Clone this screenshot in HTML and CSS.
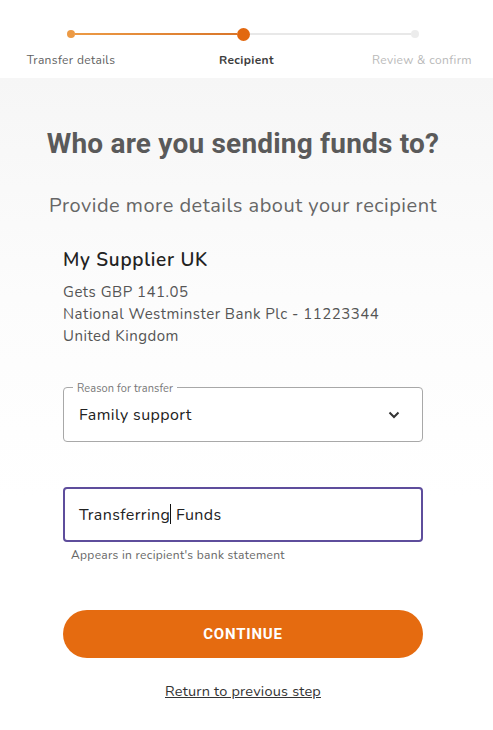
FILE: index.html
```html
<!DOCTYPE html>
<html lang="en">
<head>
<meta charset="utf-8">
<title>Recipient</title>
<link rel="stylesheet" href="styles.css">
</head>
<body>
<header class="stepper">
  <div class="track">
    <span class="dot dot-done"></span>
    <span class="line line-done"></span>
    <span class="dot dot-current"></span>
    <span class="line line-todo"></span>
    <span class="dot dot-todo"></span>
  </div>
  <div class="labels">
    <span class="label">Transfer details</span>
    <span class="label label-current">Recipient</span>
    <span class="label label-todo">Review &amp; confirm</span>
  </div>
</header>
<main class="content">
  <h1 class="title">Who are you sending funds to?</h1>
  <p class="subtitle">Provide more details about your recipient</p>
  <section class="recipient">
    <h2 class="recipient-name">My Supplier UK</h2>
    <p class="recipient-line">Gets GBP 141.05</p>
    <p class="recipient-line">National Westminster Bank Plc - 11223344</p>
    <p class="recipient-line">United Kingdom</p>
  </section>
  <div class="field select-field">
    <span class="field-label">Reason for transfer</span>
    <span class="field-value">Family support</span>
    <svg class="chevron" width="12" height="8" viewBox="0 0 12 8"><path d="M1.5 1.5 L6 6 L10.5 1.5" fill="none" stroke="#333" stroke-width="2"/></svg>
  </div>
  <div class="field input-field">
    <span class="field-value">Transferring<span class="caret"></span> Funds</span>
  </div>
  <p class="helper">Appears in recipient's bank statement</p>
  <button class="continue">CONTINUE</button>
  <a class="back" href="#">Return to previous step</a>
</main>
</body>
</html>
```
FILE: styles.css
```css
* { box-sizing: border-box; }
html, body { margin: 0; padding: 0; }
body {
  width: 493px;
  min-height: 730px;
  font-family: "Nunito", "Noto Sans", "Open Sans", sans-serif;
  background: #fff;
  color: #333;
}
.stepper {
  height: 78px;
  background: #fff;
  padding-top: 28px;
}
.track {
  display: flex;
  align-items: center;
  padding: 0 74px 0 67px;
  height: 12px;
}
.dot { border-radius: 50%; flex: none; }
.dot-done { width: 8px; height: 8px; background: #ec9a45; }
.dot-current { width: 13px; height: 13px; background: #e2680f; }
.dot-todo { width: 8px; height: 8px; background: #ececec; }
.line { flex: 1; height: 2px; }
.line-done { background: linear-gradient(90deg, #ec9a45, #d9762a); }
.line-todo { background: #e8e8e8; }
.labels {
  display: grid;
  grid-template-columns: 142px 1fr 142px;
  margin-top: 12px;
  font-size: 12px;
  letter-spacing: 0.35px;
  color: #5f5f5f;
  text-align: center;
}
.label-current { font-weight: 700; color: #3d3d3d; }
.label-todo { color: #b9b9b9; }

.content {
  background: linear-gradient(#f6f6f6 0, #fcfcfc 220px, #fff 420px);
  min-height: 652px;
  padding: 49px 70px 0 63px;
  display: flex;
  flex-direction: column;
}
.title {
  margin: 0;
  font-family: "Roboto", "Liberation Sans", sans-serif;
  font-weight: 700;
  font-size: 28px;
  color: #5a5a5a;
  text-align: center;
  margin-left: -20px;
  margin-right: -20px;
  letter-spacing: 0.2px;
}
.subtitle {
  margin: 32px -20px 0;
  font-size: 20px;
  letter-spacing: 0.5px;
  color: #666;
  text-align: center;
}
.recipient { margin-top: 28px; }
.recipient-name {
  margin: 0 0 8px;
  font-size: 19px;
  font-weight: 600;
  letter-spacing: 0.7px;
  color: #222;
}
.recipient-line {
  margin: 0;
  font-size: 15px;
  line-height: 22px;
  letter-spacing: 0.5px;
  color: #555;
}
.field {
  position: relative;
  height: 55px;
  border-radius: 4px;
  display: flex;
  align-items: center;
  padding: 0 15px;
  background: #fff;
}
.select-field {
  margin-top: 40px;
  border: 1px solid #a8a8a8;
}
.field-label {
  position: absolute;
  top: -6px;
  left: 9px;
  padding: 0 4px;
  font-size: 11px;
  line-height: 13px;
  letter-spacing: 0.1px;
  color: #777;
  background: linear-gradient(transparent 40%, #fff 40%);
}
.field-value {
  font-size: 16px;
  letter-spacing: 0.4px;
  color: #222;
  flex: 1;
}
.chevron { margin-right: 7px; }
.input-field {
  margin-top: 45px;
  border: 2px solid #5e4d9c;
  padding-left: 14px;
}
.caret {
  display: inline-block;
  width: 1px;
  height: 20px;
  background: #111;
  vertical-align: -4px;
}
.helper {
  margin: 5px 0 0 8px;
  font-size: 12px;
  letter-spacing: 0.3px;
  color: #666;
}
.continue {
  margin-top: 47px;
  height: 48px;
  border: none;
  border-radius: 24px;
  background: #e56b10;
  color: #fff;
  font-family: "Roboto", "Liberation Sans", sans-serif;
  font-weight: 700;
  font-size: 15px;
  letter-spacing: 0.8px;
}
.back {
  align-self: center;
  margin-top: 23px;
  font-size: 14.5px;
  letter-spacing: 0.2px;
  color: #333;
  text-decoration: underline;
}
```
